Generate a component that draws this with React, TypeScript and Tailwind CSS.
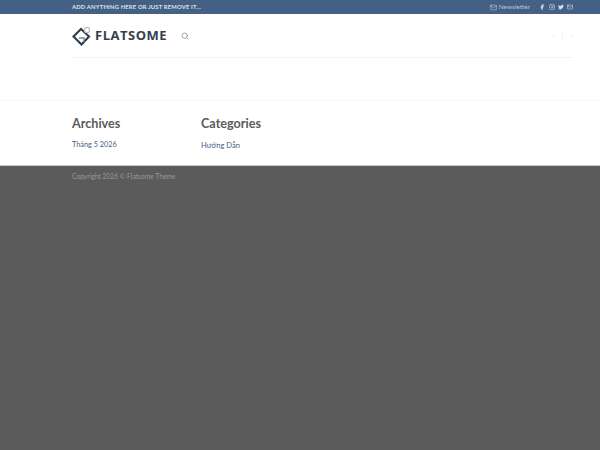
import { Mail, Search, Facebook, Instagram, Twitter, ChevronLeft, ChevronRight } from "lucide-react";

function Logo() {
  return (
    <svg width="20" height="20" viewBox="0 0 20 20" fill="none">
      <path d="M9 3 L17 10.5 L9.5 18.5 L1.5 10.5 Z" stroke="#34404c" strokeWidth="2.2" fill="none" />
      <path d="M7 12 h5 v4" stroke="#7a8794" strokeWidth="1.4" />
      <circle cx="15" cy="4" r="2.6" stroke="#b9bfc6" strokeWidth="1.2" fill="#fff" />
    </svg>
  );
}

export default function App() {
  return (
    <div className="min-h-[450px] flex flex-col bg-[#5b5b5b] font-['Lato','Liberation_Sans',sans-serif]">
      <div className="h-[14px] bg-[#446084] shrink-0">
        <div className="ml-[72px] mr-[27px] h-full flex items-center justify-between">
          <span className="text-[5.8px] font-bold tracking-[0.2px] text-[#dfe5ec] uppercase">Add anything here or just remove it...</span>
          <div className="flex items-center text-[#dfe5ec]">
            <Mail size={7} strokeWidth={1.5} />
            <span className="text-[6.5px] ml-[2px] text-[#b9c5d4]">Newsletter</span>
            <Facebook size={6} className="ml-[9px]" fill="currentColor" strokeWidth={1} />
            <Instagram size={6} className="ml-[4px]" strokeWidth={2} />
            <Twitter size={6} className="ml-[3px]" fill="currentColor" strokeWidth={1} />
            <Mail size={6} className="ml-[3px]" strokeWidth={2} />
          </div>
        </div>
      </div>
      <div className="bg-white h-[87px] shrink-0 border-b border-[#f8f8f8]">
        <div className="ml-[72px] mr-[27px] h-[44px] border-b border-[#f4f4f4] flex items-center justify-between">
          <div className="flex items-center">
            <Logo />
            <span className="ml-[3px] text-[13px] font-bold tracking-[0.5px] text-[#34404c] font-['Open_Sans','Lato',sans-serif]">FLATSOME</span>
            <Search size={8} strokeWidth={2.4} className="ml-[14px] text-[#8e8e8e]" />
          </div>
          <div className="flex items-center text-[#d9d9d9] mr-[-1px]">
            <ChevronLeft size={5} />
            <div className="w-px h-[14px] bg-[#f4f4f4] mx-[6px]" />
            <ChevronRight size={5} />
          </div>
        </div>
      </div>
      <div className="bg-white h-[65px] shrink-0 border-b border-[#c9c9c9]">
        <div className="mx-[72px] flex pt-[14px]">
          <div className="w-[129px]">
            <h3 className="text-[12.6px] leading-[18px] font-bold text-[#5a5a5a]">Archives</h3>
            <p className="text-[7.3px] leading-[10px] mt-[7px] text-[#446084]">Tháng 5 2026</p>
          </div>
          <div>
            <h3 className="text-[12.6px] leading-[18px] font-bold text-[#5a5a5a]">Categories</h3>
            <p className="text-[7.6px] leading-[10px] mt-[7px] text-[#446084]">Hướng Dẫn</p>
          </div>
        </div>
      </div>
      <div className="px-[72px] pt-[6px]">
        <p className="text-[6.7px] leading-[9px] text-[#9a9a9a]">Copyright 2026 © Flatsome Theme</p>
      </div>
    </div>
  );
}
